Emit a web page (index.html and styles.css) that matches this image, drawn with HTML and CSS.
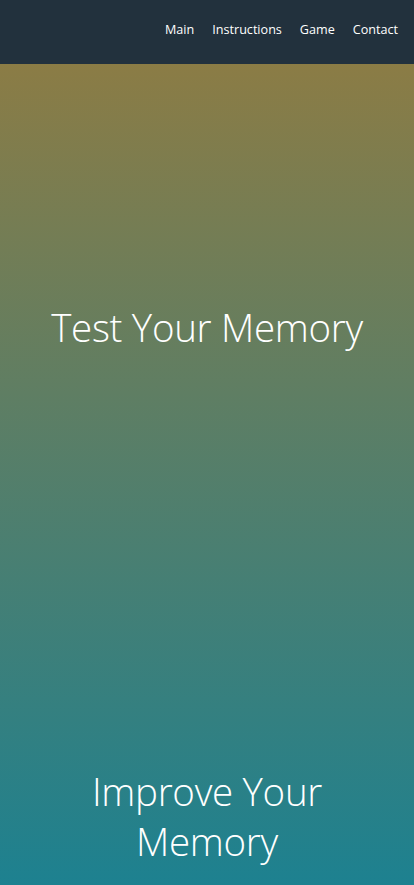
FILE: index.html
```html
<!DOCTYPE html>
<html lang="en">
<head>
<meta charset="utf-8">
<title>Memory Game</title>
<link rel="stylesheet" href="styles.css">
</head>
<body>
<header class="topbar">
  <nav class="nav">
    <a href="#" class="nav-link">Main</a>
    <a href="#" class="nav-link">Instructions</a>
    <a href="#" class="nav-link">Game</a>
    <a href="#" class="nav-link">Contact</a>
  </nav>
</header>
<main class="page">
  <section class="hero">
    <h1 class="hero-title">Test Your Memory</h1>
  </section>
  <section class="improve">
    <h2 class="improve-title">Improve Your Memory</h2>
  </section>
</main>
</body>
</html>
```
FILE: styles.css
```css
* { box-sizing: border-box; }
html, body { margin: 0; padding: 0; }
body {
  font-family: "Open Sans", "Liberation Sans", sans-serif;
  background: #1d8190;
  color: #fff;
}
.topbar {
  height: 64px;
  background: #22313d;
  display: flex;
  align-items: center;
  justify-content: flex-end;
  padding: 0 16px 6px 0;
}
.nav {
  display: flex;
  gap: 18px;
}
.nav-link {
  color: #fff;
  text-decoration: none;
  font-size: 12.6px;
  font-weight: 400;
}
.page {
  height: 821px;
  background: linear-gradient(to bottom, #8b7c45 0%, #1d8190 100%);
  display: flex;
  flex-direction: column;
  overflow: hidden;
}
.hero {
  height: 702px;
  display: flex;
  justify-content: center;
  padding-top: 238px;
}
.hero-title, .improve-title {
  margin: 0;
  font-weight: 300;
  font-size: 38.5px;
  line-height: 50px;
  text-align: center;
  letter-spacing: -0.3px;
}
.improve {
  padding: 0 70px;
}
```
